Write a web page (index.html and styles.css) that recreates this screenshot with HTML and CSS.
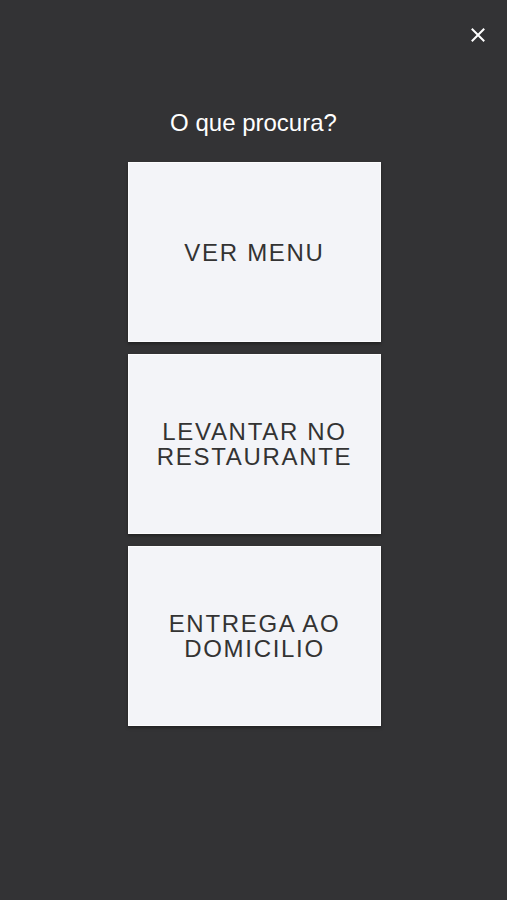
FILE: index.html
```html
<!DOCTYPE html>
<html lang="pt">
<head>
<meta charset="utf-8">
<link rel="stylesheet" href="styles.css">
</head>
<body>
<div class="screen">
  <div class="topbar">
    <button class="close" aria-label="Fechar">
      <svg width="14" height="14" viewBox="0 0 14 14"><path d="M1.5 1.5 L12.5 12.5 M12.5 1.5 L1.5 12.5" stroke="#fff" stroke-width="2" stroke-linecap="square" fill="none"/></svg>
    </button>
  </div>
  <h1 class="title">O que procura?</h1>
  <div class="options">
    <a class="option">VER MENU</a>
    <a class="option">LEVANTAR NO<br>RESTAURANTE</a>
    <a class="option">ENTREGA AO<br>DOMICILIO</a>
  </div>
</div>
</body>
</html>
```
FILE: styles.css
```css
html, body {
  margin: 0;
  padding: 0;
  background: #333335;
}
.screen {
  width: 507px;
  height: 900px;
  display: flex;
  flex-direction: column;
  align-items: center;
  font-family: "Liberation Sans", Arial, sans-serif;
}
.topbar {
  align-self: stretch;
  display: flex;
  justify-content: flex-end;
  padding: 28px 22px 0 0;
  height: 14px;
}
.close {
  background: none;
  border: 0;
  padding: 0;
  width: 14px;
  height: 14px;
  display: flex;
}
.title {
  margin: 67px 0 0 0;
  font-size: 24px;
  font-weight: normal;
  color: #fff;
  line-height: 28px;
}
.options {
  margin-top: 25px;
  padding-left: 2px;
  display: flex;
  flex-direction: column;
  gap: 12px;
}
.option {
  box-sizing: border-box;
  width: 253px;
  height: 180px;
  background: #f3f4f8;
  border: 1px solid #fcfcfd;
  box-shadow: 0 2px 3px rgba(0,0,0,0.35);
  display: flex;
  align-items: center;
  justify-content: center;
  text-align: center;
  color: #333;
  font-size: 24px;
  line-height: 25px;
  letter-spacing: 1.7px;
}
```
